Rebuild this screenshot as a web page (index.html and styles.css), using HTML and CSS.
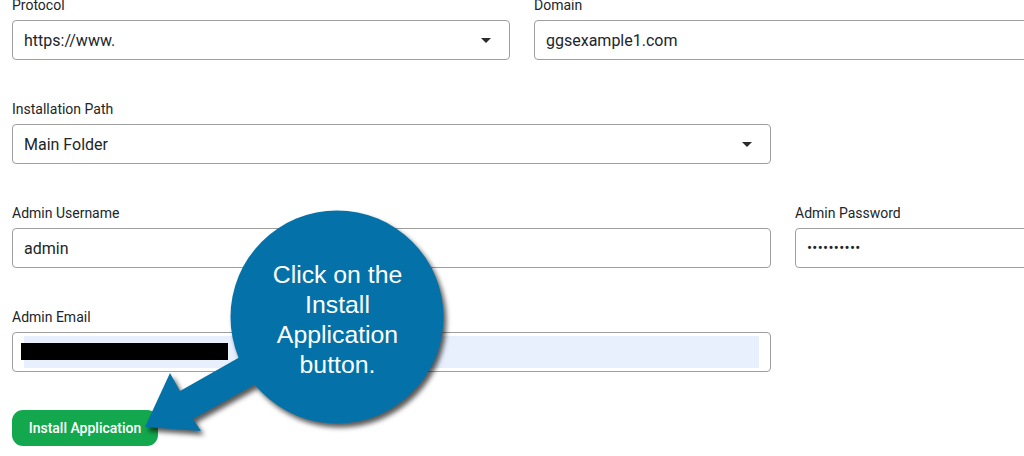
FILE: index.html
```html
<!DOCTYPE html>
<html lang="en">
<head>
<meta charset="utf-8">
<title>Install Application</title>
<link rel="stylesheet" href="styles.css">
</head>
<body>
<div class="page">
  <div class="form">
    <div class="field span-6">
      <div class="label">Protocol</div>
      <div class="box select"><span>https://www.</span><i class="caret"></i></div>
    </div>
    <div class="field span-6">
      <div class="label">Domain</div>
      <div class="box"><span>ggsexample1.com</span></div>
    </div>
    <div class="field span-9">
      <div class="label">Installation Path</div>
      <div class="box select"><span>Main Folder</span><i class="caret"></i></div>
    </div>
    <div class="field span-9">
      <div class="label">Admin Username</div>
      <div class="box"><span>admin</span></div>
    </div>
    <div class="field span-3">
      <div class="label">Admin Password</div>
      <div class="box"><span class="dots">••••••••••</span></div>
    </div>
    <div class="field span-9">
      <div class="label">Admin Email</div>
      <div class="box email"><div class="autofill"><span class="redact"></span></div></div>
    </div>
  </div>
  <div class="actions">
    <button class="install">Install Application</button>
  </div>

  <svg class="callout-shape" width="1024" height="456" viewBox="0 0 1024 456">
    <g class="shape">
      <circle cx="337" cy="317" r="106.5" fill="#0472a8"/>
      <polygon fill="#0472a8" points="145,427 170,373 180,391 302,322 315,351 193,419 201,431"/>
    </g>
  </svg>
  <div class="callout-text">Click on the<br>Install<br>Application<br>button.</div>
</div>
</body>
</html>
```
FILE: styles.css
```css
html, body {
  margin: 0;
  padding: 0;
  overflow: hidden;
  background: #ffffff;
}

body {
  font-family: Roboto, "Liberation Sans", Arial, sans-serif;
  color: #212529;
}

.page {
  position: relative;
  width: 1024px;
  height: 456px;
  overflow: hidden;
}

.form {
  display: grid;
  grid-template-columns: repeat(12, 1fr);
  column-gap: 24px;
  row-gap: 41px;
  width: 1020px;
  margin: -3px 0 0 12px;
}

.span-3 { grid-column: span 3; }
.span-6 { grid-column: span 6; }
.span-9 { grid-column: span 9; }

.label {
  font-size: 14px;
  line-height: 17px;
  margin-bottom: 6px;
  color: #212529;
}

.box {
  box-sizing: border-box;
  height: 40px;
  border: 1px solid #9e9e9e;
  border-radius: 4px;
  padding: 0 11px;
  display: flex;
  align-items: center;
  font-size: 16px;
  line-height: 19px;
  color: #212529;
  background: #fff;
}

.select {
  justify-content: space-between;
  padding-right: 18px;
}

.caret {
  width: 0;
  height: 0;
  border-left: 5px solid transparent;
  border-right: 5px solid transparent;
  border-top: 5px solid #2b2b2b;
  margin-top: 1px;
}

.dots {
  font-size: 15px;
  letter-spacing: 0.3px;
}

.email {
  padding: 3px 11px;
  align-items: stretch;
}

.autofill {
  flex: 1;
  background: #e8f0fe;
  position: relative;
}

.redact {
  position: absolute;
  left: -3px;
  top: 7px;
  width: 207px;
  height: 17px;
  background: #000;
}

.actions {
  margin: 38px 0 0 12px;
}

.install {
  height: 36px;
  width: 146px;
  border: none;
  border-radius: 11px;
  background: #13a84e;
  color: #fff;
  font-family: Roboto, "Liberation Sans", Arial, sans-serif;
  font-size: 14px;
  font-weight: 500;
  padding: 0;
  cursor: pointer;
}

.callout-shape {
  position: absolute;
  left: 0;
  top: 0;
  pointer-events: none;
}

.shape {
  filter: drop-shadow(3px 4px 2.5px rgba(0, 0, 0, 0.65));
}

.callout-text {
  position: absolute;
  left: 231px;
  top: 260px;
  width: 213px;
  text-align: center;
  font-family: "Liberation Sans", Arial, sans-serif;
  font-size: 24.8px;
  line-height: 30px;
  color: #ffffff;
}
```
